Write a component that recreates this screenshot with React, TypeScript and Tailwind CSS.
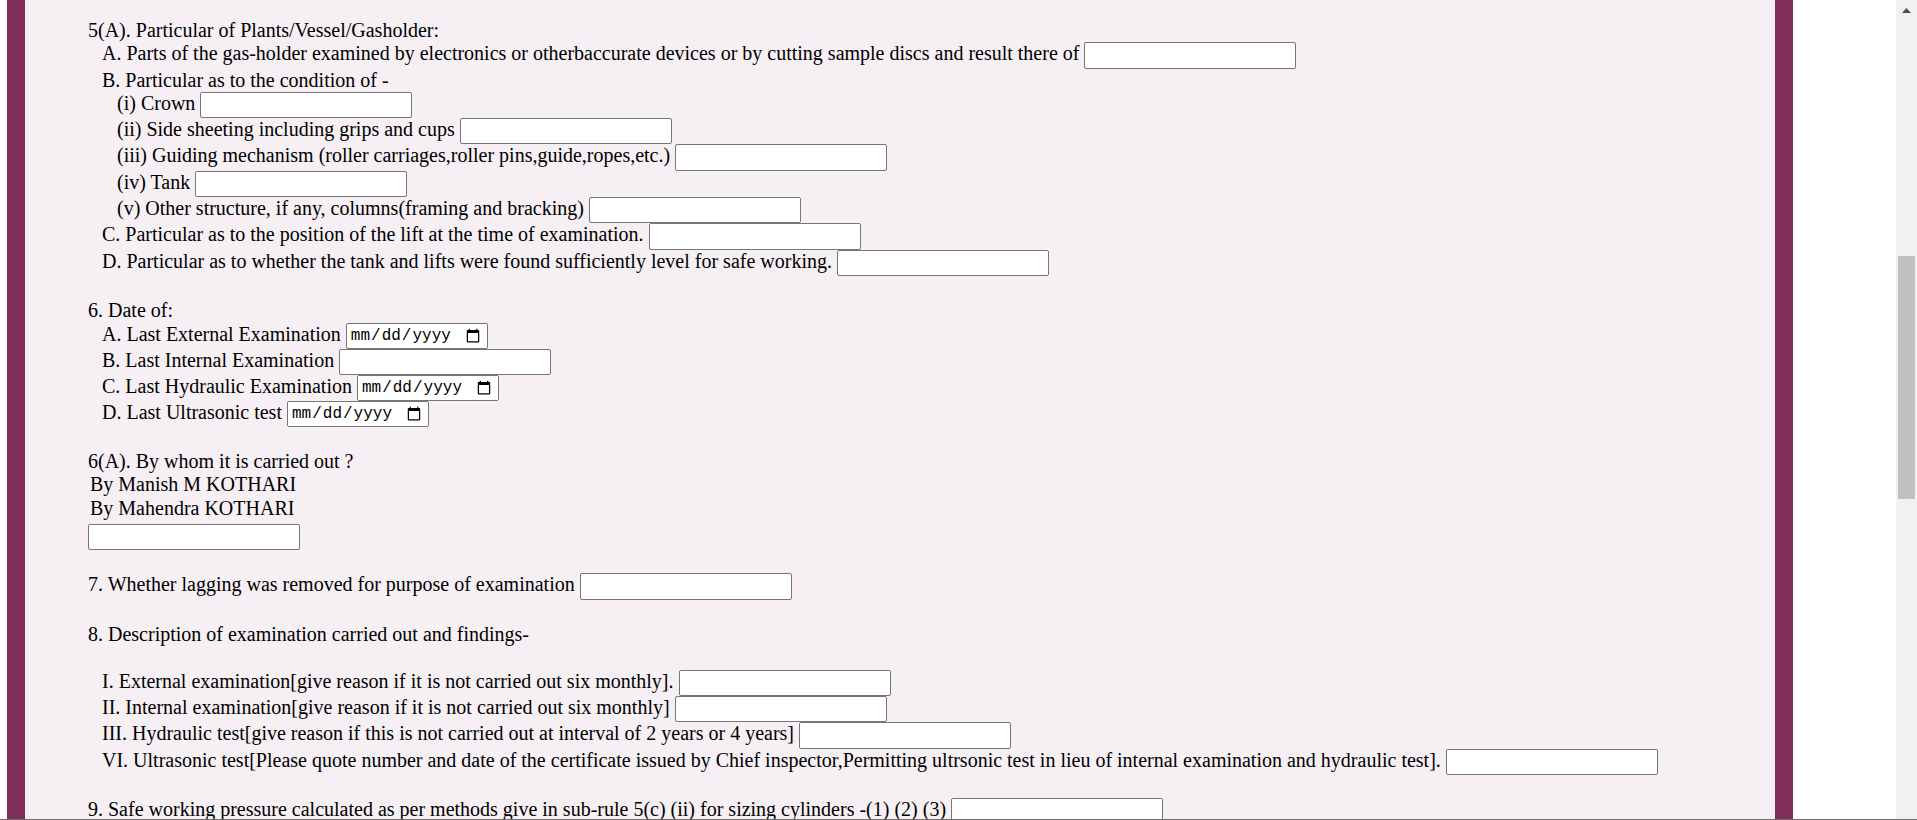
import React from "react";

const serif = { fontFamily: '"Liberation Serif", "Times New Roman", serif' };

function TextBox() {
  return (
    <input
      type="text"
      className="inline-block align-top w-[212px] h-[26.3px] border border-[#767676] rounded-[2px] bg-white px-[2px] py-[1px] text-[16.67px] leading-[normal] text-black outline-none"
      style={{ fontFamily: '"Liberation Sans", Arial, sans-serif' }}
    />
  );
}

function DateBox() {
  return (
    <input
      type="date"
      className="inline-block align-top w-[142px] h-[26px] border border-[#767676] rounded-[2px] bg-white pl-[3px] pr-[4px] py-[1px] text-[16px] leading-[normal] text-black outline-none"
      style={{ fontFamily: '"Liberation Mono", "DejaVu Sans Mono", monospace' }}
    />
  );
}

function L1({ children }: { children: React.ReactNode }) {
  return <div className="pl-[14px]">{children}</div>;
}
function L2({ children }: { children: React.ReactNode }) {
  return <div className="pl-[29px]">{children}</div>;
}
function Blank() {
  return (
    <div>
      <br />
    </div>
  );
}

export default function App() {
  return (
    <div className="flex flex-col h-[820px] w-full overflow-hidden bg-white">
      <div className="flex flex-1 min-h-0">
        <div className="w-[7px] shrink-0" />
        <div
          className="w-[1786px] shrink-0 border-x-[18px] border-[#7f2f5a] bg-[#f6f0f5] pl-[63px] pt-[19px] text-[20px] leading-[23.3px] text-black overflow-hidden"
          style={serif}
        >
          <div>5(A). Particular of Plants/Vessel/Gasholder:</div>
          <L1>
            A. Parts of the gas-holder examined by electronics or otherbaccurate devices or by cutting sample discs and result there of{" "}
            <TextBox />
          </L1>
          <L1>B. Particular as to the condition of -</L1>
          <L2>
            (i) Crown <TextBox />
          </L2>
          <L2>
            (ii) Side sheeting including grips and cups <TextBox />
          </L2>
          <L2>
            (iii) Guiding mechanism (roller carriages,roller pins,guide,ropes,etc.) <TextBox />
          </L2>
          <L2>
            (iv) Tank <TextBox />
          </L2>
          <L2>
            (v) Other structure, if any, columns(framing and bracking) <TextBox />
          </L2>
          <L1>
            C. Particular as to the position of the lift at the time of examination. <TextBox />
          </L1>
          <L1>
            D. Particular as to whether the tank and lifts were found sufficiently level for safe working. <TextBox />
          </L1>
          <Blank />
          <div>6. Date of:</div>
          <L1>
            A. Last External Examination <DateBox />
          </L1>
          <L1>
            B. Last Internal Examination <TextBox />
          </L1>
          <L1>
            C. Last Hydraulic Examination <DateBox />
          </L1>
          <L1>
            D. Last Ultrasonic test <DateBox />
          </L1>
          <Blank />
          <div>6(A). By whom it is carried out ?</div>
          <div className="pl-[2px]">By Manish M KOTHARI</div>
          <div className="pl-[2px]">By Mahendra KOTHARI</div>
          <div className="pt-[3.8px]">
            <TextBox />
          </div>
          <Blank />
          <div>
            7. Whether lagging was removed for purpose of examination <TextBox />
          </div>
          <Blank />
          <div>8. Description of examination carried out and findings-</div>
          <Blank />
          <L1>
            I. External examination[give reason if it is not carried out six monthly]. <TextBox />
          </L1>
          <L1>
            II. Internal examination[give reason if it is not carried out six monthly] <TextBox />
          </L1>
          <L1>
            III. Hydraulic test[give reason if this is not carried out at interval of 2 years or 4 years] <TextBox />
          </L1>
          <L1>
            VI. Ultrasonic test[Please quote number and date of the certificate issued by Chief inspector,Permitting ultrsonic test in lieu of internal examination and hydraulic test].{" "}
            <TextBox />
          </L1>
          <Blank />
          <div>
            9. Safe working pressure calculated as per methods give in sub-rule 5(c) (ii) for sizing cylinders -(1) (2) (3) <TextBox />
          </div>
        </div>
        <div className="flex-1" />
        <div className="w-[21px] shrink-0 bg-[#f1f1f1] flex flex-col items-center">
          <svg width="9" height="5" viewBox="0 0 9 5" className="mt-[8px] shrink-0">
            <polygon points="4.5,0 9,5 0,5" fill="#505050" />
          </svg>
          <div className="mt-[243px] w-[17px] h-[243px] bg-[#c1c1c1] shrink-0" />
        </div>
      </div>
      <div className="h-[1px] bg-[#6f6f6f] shrink-0" />
    </div>
  );
}
